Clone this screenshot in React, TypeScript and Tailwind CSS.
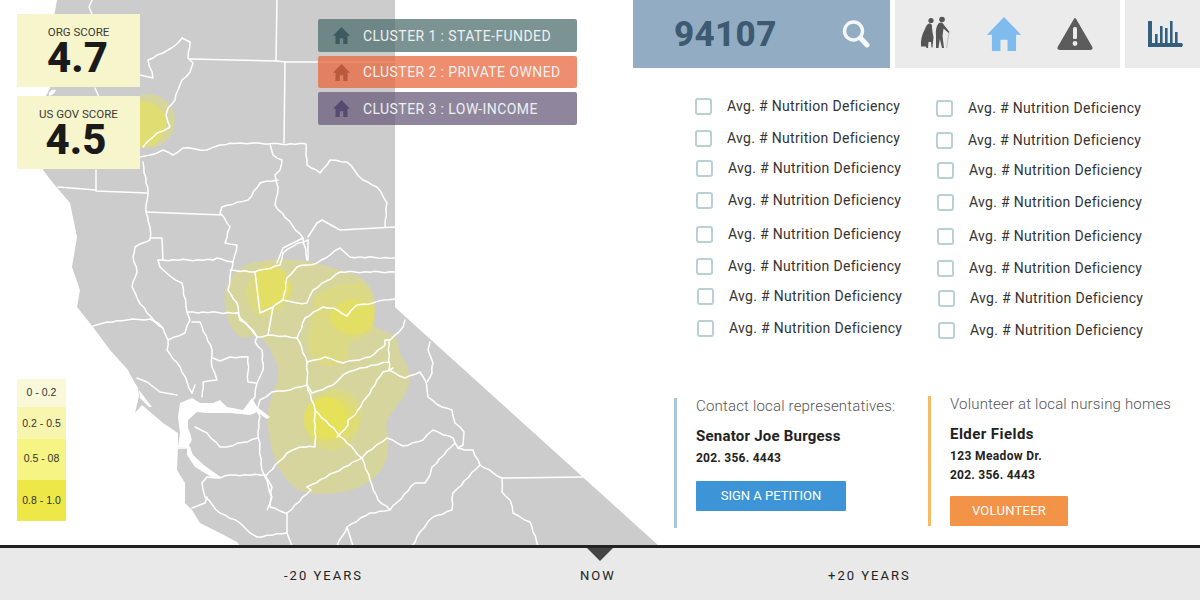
import React from "react";

type P = [number, number];

const smooth = (pts: P[]) => {
  const n = pts.length;
  let d = `M${pts[0][0]} ${pts[0][1]}`;
  for (let i = 0; i < n; i++) {
    const p0 = pts[(i - 1 + n) % n], p1 = pts[i], p2 = pts[(i + 1) % n], p3 = pts[(i + 2) % n];
    d += ` C${p1[0] + (p2[0] - p0[0]) / 6} ${p1[1] + (p2[1] - p0[1]) / 6} ${p2[0] - (p3[0] - p1[0]) / 6} ${p2[1] - (p3[1] - p1[1]) / 6} ${p2[0]} ${p2[1]}`;
  }
  return d + "Z";
};
const z9 = (a: number[][]): P[] => a.map(([x, y]) => [x / 3 + 200, y / 3 + 240]);

const wiggle = (s: string) => {
  const pts = s.split(" ").map((p) => p.split(",").map(Number));
  if (pts.length < 5) return s;
  const out: string[] = [];
  let k = 0;
  for (let i = 0; i < pts.length - 1; i++) {
    const [x1, y1] = pts[i], [x2, y2] = pts[i + 1];
    const len = Math.hypot(x2 - x1, y2 - y1);
    const steps = Math.max(1, Math.floor(len / 5));
    const nx = -(y2 - y1) / (len || 1), ny = (x2 - x1) / (len || 1);
    out.push(`${x1},${y1}`);
    for (let j = 1; j < steps; j++) {
      k++;
      const off = ((k * 7) % 5 - 2) * 0.35;
      out.push(`${x1 + ((x2 - x1) * j) / steps + nx * off},${y1 + ((y2 - y1) * j) / steps + ny * off}`);
    }
  }
  const last = pts[pts.length - 1];
  out.push(`${last[0]},${last[1]}`);
  return out.join(" ");
};

const land = "57,0 48,50 50,88 46,96 43,170 53,183 70,203 77,237 72,267 73,270 80,290 77,307 93,327 110,350 128,370 132,378 138,388 139,396 135,413 142,405 163,423 178,433 178,447 177,470 185,483 185,503 192,510 200,523 220,533 237,542 240,546 659,546 398,310 395,307 395,0";
const bay = "180,403 192,398 200,403 213,403 220,400 227,407 243,410 252,398 257,407 270,417 267,419 257,412 250,415 230,413 207,413 197,412 188,420 188,428 190,433 192,440 189,445 193,455 205,466 222,478 213,478 195,467 187,455 187,448 178,447 180,433 178,417";
const lines = [
  "92,0 89,7 92,14",
  "95,88 99,97",
  "140,75 153,78 148,60 163,53 173,47 182,38 190,42 188,58 193,63 190,72 182,80 178,90 175,100 168,108 166,115 170,127 157,133 143,147",
  "190,59 277,61 285,62 395,62",
  "277,0 276,61",
  "285,62 284,143",
  "140,157 150,155 163,150 173,155 183,148 207,150 220,145 240,143 253,143 270,144 306,144 307,165 320,173 330,160 347,162 363,180 377,187 387,203 385,227",
  "270,144 273,155 282,160 280,170 275,175 278,187 275,205 303,238 307,260",
  "278,180 260,183 248,200 222,207 220,213 230,227 225,243 237,245 233,262",
  "143,162 148,193 146,212 150,227 150,240 135,247 133,257 137,272 132,287 138,300 147,313 163,328 168,340 167,350 180,367 192,393",
  "96,170 96,191 147,193",
  "58,187 96,190",
  "146,212 222,215",
  "150,238 162,238 163,260",
  "158,260 160,267 170,276 182,283 187,312 190,320 185,333 168,340",
  "158,260 213,260 217,258 233,262 230,277 228,290 237,303 240,318 250,328 257,337 268,335 297,338",
  "303,238 283,248 277,263",
  "317,223 322,220 340,230 395,227",
  "317,223 308,237",
  "230,270 255,272 280,265 283,253 298,243 308,240",
  "255,272 260,313 273,307 268,335",
  "273,307 275,305 283,300 297,303 307,303 313,290 340,272 395,272",
  "283,300 287,278 297,267 317,263 330,255 340,248 350,257 395,258",
  "308,240 308,260",
  "297,338 300,343 307,362 307,385 315,410 315,447 300,447 287,453 265,477 272,497 267,510",
  "297,338 305,318 323,307 333,308 347,316 357,305 373,303 383,300 395,299",
  "307,362 325,357 343,363 370,357 383,347 385,345 385,340 390,340 403,327 405,320",
  "389,340 389,370 405,378 420,372 425,380 427,390 428,397 442,407 452,410 455,423 464,432 463,445 458,448 465,450 473,450 480,465 502,478 502,492 510,500 513,513 530,522 538,546",
  "430,342 428,350 433,363 432,373 427,382",
  "502,478 583,477",
  "307,385 312,393 333,385 343,375 360,368 389,362",
  "307,385 290,390 272,392 260,400 257,410 260,417 258,432 262,470 265,477",
  "315,410 362,458 370,480 378,500 390,510",
  "337,437 348,425 348,420 355,415 383,372 393,368",
  "307,487 362,458 367,452 387,438 403,446 423,440 433,430 453,438 458,448",
  "455,443 432,467 430,475 425,483 415,483 390,510 370,513 347,527 337,546",
  "347,527 353,546",
  "480,465 453,493 452,510 433,517 420,532 412,546",
  "307,487 311,490 287,513 285,513 270,507 272,487 265,475",
  "192,393 195,385",
  "188,312 238,313 240,320 253,330 257,337 255,342 262,350 263,370 257,383 255,397 250,403",
  "93,326 107,322 127,320 150,319 163,328",
  "192,322 200,322 212,350 212,367 217,380 203,382 202,397",
  "213,358 220,361 230,357 248,357 248,382 257,383",
  "137,378 147,382 160,392 177,395",
  "195,427 207,433 220,447 227,447 258,438",
  "178,448 190,448",
  "265,475 230,475 220,478 207,477 202,483 205,497 220,513 240,523 250,533 257,537 287,533",
  "287,513 287,527 287,533 292,546",
  "192,508 205,503 207,497",
];

const bigBlob = z9([[110,95],[170,65],[260,58],[350,70],[420,90],[480,110],[515,150],[525,205],[520,255],[585,290],[600,340],[625,390],[625,440],[590,500],[560,545],[565,610],[550,680],[490,735],[400,760],[300,750],[240,690],[210,600],[205,510],[235,400],[205,320],[170,290],[120,290],[85,240],[75,160]]);
const midBlob = z9([[345,170],[400,140],[480,130],[520,180],[525,240],[510,280],[450,310],[440,360],[385,380],[335,350],[325,290],[340,210]]);
const innerBlob = z9([[390,220],[450,180],[515,205],[512,260],[460,285],[410,265]]);
const topMid = z9([[135,160],[170,100],[235,90],[275,150],[255,195],[215,225],[170,225]]);
const topInner = z9([[172,95],[235,80],[275,140],[250,180],[180,200]]);

const houseD = "M12 0 L24 12.5 L20.5 12.5 L20.5 24 L14.5 24 L14.5 16 L9.5 16 L9.5 24 L3.5 24 L3.5 12.5 L0 12.5 Z";
const House = ({ cls }: { cls: string }) => (
  <svg viewBox="0 0 24 24" className={cls}>
    <path d={houseD} fill="currentColor" />
  </svg>
);

const Elderly = () => (
  <svg viewBox="0 0 32 36" className="w-[32px] h-[36px]">
    <g fill="#555555">
      <circle cx="12" cy="4.5" r="2.6" />
      <circle cx="23" cy="3.5" r="2.8" />
      <path d="M10 7.5 C12.5 7 13.5 9 13 12 L13.5 16 L14.5 21 L13.5 31.5 L12.5 31.5 L12 26 L9.5 26 L9 32 L7.5 32 L7 30.5 L2 30.5 C1.5 24 3 18 6 13 C7 10 8 8.5 10 7.5 Z" />
      <path d="M20 7 C22.5 5.5 24 7 25 9 L30.5 16 L29.5 17 L24.5 12.5 L23.5 20 L25 32 L23 32 L20.8 23 L19.5 32 L17 32 L17 19 C16.5 15 17.5 9 20 7 Z" />
    </g>
    <path d="M30 17 L27.5 32" stroke="#bdbdbd" strokeWidth="1" fill="none" />
  </svg>
);

const Warning = () => (
  <svg viewBox="0 0 38 36" className="w-[38px] h-[36px]">
    <path d="M19 3 L35.5 31.5 Q36 33 34 33 L4 33 Q2 33 2.5 31.5 Z" fill="#5c5c5c" stroke="#5c5c5c" strokeWidth="2" strokeLinejoin="round" />
    <rect x="17" y="11" width="4" height="12" rx="1.5" fill="#ebebeb" />
    <circle cx="19" cy="27.5" r="2.4" fill="#ebebeb" />
  </svg>
);

const Chart = () => (
  <svg viewBox="0 0 36 28" className="w-[36px] h-[28px]">
    <g fill="#33607f">
      <path d="M1 1 L5 1 L5 23 L35 23 L36 25 L35 27 L1 27 Z" />
      <rect x="8" y="14" width="2.6" height="10" />
      <rect x="13" y="6" width="2.6" height="18" />
      <rect x="18" y="8" width="2.6" height="16" />
      <rect x="23" y="1" width="2.6" height="23" />
      <rect x="28" y="12" width="2.6" height="12" />
    </g>
  </svg>
);

const Search = () => (
  <svg viewBox="0 0 28 30" className="w-[28px] h-[30px]">
    <circle cx="11.5" cy="12" r="9" fill="none" stroke="#f4f8fb" strokeWidth="3.4" />
    <path d="M18.5 19 L25 26" stroke="#f4f8fb" strokeWidth="5" strokeLinecap="round" />
  </svg>
);

const Score = ({ label, value, valueCls }: { label: string; value: string; valueCls: string }) => (
  <div className="h-[73px] w-[123px] bg-[#f6f5cb] flex flex-col items-center">
    <div className="mt-[11px] text-[11.5px] leading-[14px] text-[#3a3a3a]">{label}</div>
    <div className={`mt-[1px] text-[42px] leading-[36px] font-extrabold text-[#1a1a1a] ${valueCls}`}>{value}</div>
  </div>
);

const Cluster = ({ bg, icon, label, h }: { bg: string; icon: string; label: string; h: string }) => (
  <div className={`w-[259px] rounded-[2px] flex items-center pl-[15px] ${bg} ${h}`}>
    <House cls={`w-[17px] h-[17px] ${icon}`} />
    <span className="ml-[13px] pt-[1px] text-[14px] tracking-[0.03em] text-[#eef0ee] whitespace-nowrap">{label}</span>
  </div>
);

const col1 = [
  "mt-[0px] ml-[62px] gap-[15px]",
  "mt-[15px] ml-[62px] gap-[15px]",
  "mt-[13px] ml-[63px] gap-[15px]",
  "mt-[15px] ml-[63px] gap-[15px]",
  "mt-[17px] ml-[63px] gap-[15px]",
  "mt-[15px] ml-[63px] gap-[15px]",
  "mt-[13px] ml-[64px] gap-[15px]",
  "mt-[15px] ml-[64px] gap-[15px]",
];
const col2 = [
  "mt-[2px] ml-[62px] gap-[15px]",
  "mt-[15px] ml-[62px] gap-[15px]",
  "mt-[13px] ml-[63px] gap-[15px]",
  "mt-[15px] ml-[63px] gap-[15px]",
  "mt-[17px] ml-[63px] gap-[15px]",
  "mt-[15px] ml-[63px] gap-[15px]",
  "mt-[13px] ml-[64px] gap-[15px]",
  "mt-[15px] ml-[64px] gap-[15px]",
];

const Row = ({ cls }: { cls: string }) => (
  <div className={`flex items-center h-[17px] ${cls}`}>
    <div className="w-[17px] h-[17px] rounded-[3px] border-2 border-[#b9d0d5] bg-white shrink-0" />
    <span className="text-[14px] leading-[17px] tracking-[0.022em] text-[#333333] whitespace-nowrap">Avg. # Nutrition Deficiency</span>
  </div>
);

export default function App() {
  const font = { fontFamily: '"Roboto", "Liberation Sans", sans-serif' };
  return (
    <div className="relative w-[1200px] h-[600px] overflow-hidden bg-white flex flex-col" style={font}>
      <svg className="absolute left-0 top-0" width="1200" height="546" viewBox="0 0 1200 546">
        <polygon points={land} fill="#cccccc" />
        <path d="M49 93 Q52 88 56 90 Q54 95 49 96 Z" fill="#ffffff" />
        <polygon points="139,390 152,407 149,407 140,398" fill="#ffffff" />
        <g fill="#eee846" fillOpacity="0.34">
          <path d={smooth(bigBlob)} />
          <circle cx="148" cy="121" r="27" />
        </g>
        <g fill="#ece63c" fillOpacity="0.25">
          <path d={smooth(midBlob)} />
          <path d={smooth(topMid)} />
          <circle cx="336" cy="414" r="25" />
          <circle cx="332" cy="423" r="27" />
        </g>
        <circle cx="143" cy="124" r="23" fill="#ece63c" fillOpacity="0.45" />
        <g fill="#ece63c" fillOpacity="0.45">
          <path d={smooth(innerBlob)} />
          <path d={smooth(topInner)} />
          <circle cx="325.5" cy="418.5" r="22" />
        </g>
        <polygon points={bay} fill="#ffffff" />
        <g fill="none" stroke="#ffffff" strokeWidth="1.5" strokeLinejoin="round" strokeLinecap="round">
          {lines.map((l, i) => (
            <polyline key={i} points={wiggle(l)} />
          ))}
        </g>
      </svg>

      <div className="relative flex h-[545px]">
        <div className="w-[633px] flex">
          <div className="ml-[17px] w-[123px] pt-[14px] pb-[24px] flex flex-col">
            <Score label="ORG SCORE" value="4.7" valueCls="-ml-[2px]" />
            <div className="h-[9px]" />
            <Score label="US GOV SCORE" value="4.5" valueCls="-ml-[5px]" />
            <div className="mt-auto w-[49px] flex flex-col text-[10.5px] text-[#333333] text-center" style={{ fontFamily: '"Liberation Sans", sans-serif' }}>
              <div className="h-[28px] bg-[#f9f8d8] flex items-center justify-center">0 - 0.2</div>
              <div className="h-[32px] bg-[#f8f6ae] flex items-center justify-center pt-[1px]">0.2 - 0.5</div>
              <div className="h-[41px] bg-[#f6f483] flex items-center justify-center pb-[1px]">0.5 - 08</div>
              <div className="h-[41px] bg-[#ede848] flex items-center justify-center">0.8 - 1.0</div>
            </div>
          </div>
          <div className="ml-[178px] pt-[19px] flex flex-col gap-[4px]">
            <Cluster bg="bg-[#506f70]/75" icon="text-[#3d5a60]" h="h-[33px]" label="CLUSTER 1 : STATE-FUNDED" />
            <Cluster bg="bg-[#e8683f]/75" icon="text-[#b85a3c]" h="h-[32px]" label="CLUSTER 2 : PRIVATE OWNED" />
            <Cluster bg="bg-[#695d7d]/75" icon="text-[#574a70]" h="h-[33px]" label="CLUSTER 3 : LOW-INCOME" />
          </div>
        </div>

        <div className="w-[567px] flex flex-col">
          <div className="flex h-[68px] gap-[5px]">
            <div className="w-[257px] bg-[#92adc3] flex items-center pl-[41px]">
              <span className="text-[35px] font-extrabold text-[#3d5a70] tracking-[0.01em] leading-none">94107</span>
              <div className="ml-auto mr-[20px]"><Search /></div>
            </div>
            <div className="w-[225px] bg-[#ebebeb] flex items-center pl-[24px]">
              <Elderly />
              <div className="ml-[36px]"><House cls="w-[34px] h-[34px] text-[#7fbbec]" /></div>
              <div className="ml-[35px]"><Warning /></div>
            </div>
            <div className="w-[75px] bg-[#ebebeb] flex items-center pl-[22px]">
              <Chart />
            </div>
          </div>

          <div className="flex pt-[30px]">
            <div className="w-[241px] flex flex-col">
              {col1.map((c, i) => <Row key={i} cls={c} />)}
            </div>
            <div className="flex flex-col">
              {col2.map((c, i) => <Row key={i} cls={c} />)}
            </div>
          </div>

          <div className="flex mt-[57px]">
            <div className="ml-[41px] w-[254px] flex border-l-[3px] border-[#a9c6dc] pl-[19px] h-[130px] mt-[2px]">
              <div className="flex flex-col">
                <div className="text-[15px] leading-[16px] font-light tracking-[0.012em] text-[#555555] whitespace-nowrap">Contact local representatives:</div>
                <div className="text-[15px] leading-[18px] mt-[13px] font-bold text-[#222222] whitespace-nowrap tracking-[0.015em]">Senator Joe Burgess</div>
                <div className="text-[12px] leading-[14px] mt-[6px] font-bold text-[#222222] tracking-[0.02em]">202. 356. 4443</div>
                <div className="mt-[16px] w-[150px] h-[30px] rounded-[1px] bg-[#3d95d8] flex items-center justify-center text-[13px] text-white">SIGN A PETITION</div>
              </div>
            </div>
            <div className="w-[272px] flex border-l-[3px] border-[#f8b968] pl-[19px] h-[130px]">
              <div className="flex flex-col">
                <div className="text-[15px] leading-[16px] font-light tracking-[0.012em] text-[#555555] whitespace-nowrap">Volunteer at local nursing homes</div>
                <div className="text-[15px] leading-[18px] mt-[13px] font-bold text-[#222222] tracking-[0.03em]">Elder Fields</div>
                <div className="text-[12px] leading-[14px] mt-[6px] font-bold text-[#222222] tracking-[0.03em]">123 Meadow Dr.</div>
                <div className="text-[12px] leading-[14px] mt-[5px] font-bold text-[#222222] tracking-[0.02em]">202. 356. 4443</div>
                <div className="mt-[14px] w-[118px] h-[30px] rounded-[1px] bg-[#f29347] flex items-center justify-center text-[13px] text-white tracking-[0.02em]">VOLUNTEER</div>
              </div>
            </div>
          </div>
        </div>
      </div>

      <div className="relative flex-1 bg-[#e9e9e9] border-t-[3px] border-[#222222] flex pl-[284px] pt-[20px] text-[13px] leading-[16px] tracking-[0.155em] text-[#222222]">
        <div className="absolute left-[587px] top-0 w-0 h-0 border-l-[13px] border-r-[13px] border-t-[13px] border-l-transparent border-r-transparent border-t-[#444444]" />
        <div className="w-[296px]">-20 YEARS</div>
        <div className="w-[248px]">NOW</div>
        <div>+20 YEARS</div>
      </div>
    </div>
  );
}
